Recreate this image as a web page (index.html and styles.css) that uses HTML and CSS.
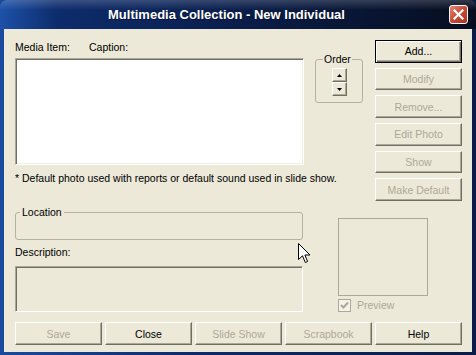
FILE: index.html
```
<!DOCTYPE html>
<html lang="en">
<head>
    <meta charset="UTF-8">
    <meta name="viewport" content="width=device-width, initial-scale=1.0">
    <title>Multimedia Collection - New Individual</title>
    <link rel="stylesheet" href="styles.css">
</head>
<body>
    <div class="window">
        <div class="titlebar">
            <span class="title">Multimedia Collection - New Individual</span>
            <span class="close-btn">
                <svg width="11" height="11" viewBox="0 0 11 11">
                    <path d="M1.5 1.5 L9.5 9.5 M9.5 1.5 L1.5 9.5" stroke="#fff" stroke-width="2.2" stroke-linecap="square"/>
                </svg>
            </span>
        </div>

        <div class="client">
            <div class="top">
                <div class="top-left">
                    <div class="list-row">
                        <div class="list-col">
                            <div class="labels">
                                <span class="lbl-media">Media Item:</span><span>Caption:</span>
                            </div>
                            <div class="listbox"></div>
                        </div>
                        <fieldset class="group order">
                            <legend>Order</legend>
                            <button class="spin">
                                <svg width="5" height="3" viewBox="0 0 5 3"><path d="M2.5 0 L5 3 L0 3 Z" fill="#000"/></svg>
                            </button>
                            <button class="spin">
                                <svg width="5" height="3" viewBox="0 0 5 3"><path d="M0 0 L5 0 L2.5 3 Z" fill="#000"/></svg>
                            </button>
                        </fieldset>
                    </div>
                    <p class="note">* Default photo used with reports or default sound used in slide show.</p>
                </div>

                <div class="side-buttons">
                    <button class="btn default">Add...</button>
                    <button class="btn" disabled>Modify</button>
                    <button class="btn" disabled>Remove...</button>
                    <button class="btn" disabled>Edit Photo</button>
                    <button class="btn" disabled>Show</button>
                    <button class="btn" disabled>Make Default</button>
                </div>
            </div>

            <div class="middle">
                <div class="mid-left">
                    <fieldset class="group location">
                        <legend>Location</legend>
                    </fieldset>
                    <div class="desc-label">Description:</div>
                    <div class="desc-box"></div>
                </div>
                <div class="preview-col">
                    <div class="preview-box"></div>
                    <div class="preview-check">
                        <span class="checkbox">
                            <svg width="9" height="9" viewBox="0 0 9 9">
                                <path d="M1 4 L3.5 6.5 L8 1.5" stroke="#aca899" stroke-width="2" fill="none"/>
                            </svg>
                        </span>
                        <span>Preview</span>
                    </div>
                </div>
            </div>

            <div class="bottom-buttons">
                <button class="btn" disabled>Save</button>
                <button class="btn">Close</button>
                <button class="btn" disabled>Slide Show</button>
                <button class="btn" disabled>Scrapbook</button>
                <button class="btn">Help</button>
            </div>
        </div>

        <!-- mouse pointer over the dialog -->
        <svg class="cursor" width="13" height="21" viewBox="0 0 13 21">
            <path d="M0.5 0.5 L0.5 16.5 L4.5 12.8 L7.3 19.5 L9.6 18.5 L6.9 12 L12 12 Z" fill="#fff" stroke="#000" stroke-width="1"/>
        </svg>
    </div>
</body>
</html>
```

FILE: styles.css
```
body {
    margin: 0;
    font-family: "Liberation Sans", Arial, sans-serif;
    font-size: 10.5px;
    line-height: 13px;
    color: #000;
    background: #0a246a;
}
.window {
    position: relative;
    width: 476px;
    height: 355px;
    box-sizing: border-box;
    padding: 0 4px 3px 4px;
    background: linear-gradient(to right, #1a4a9e 0%, #0c2a6a 40%, #0a1c48 100%);
    display: flex;
    flex-direction: column;
}
.titlebar {
    height: 29px;
    margin: 0 -4px;
    display: flex;
    align-items: center;
    border-radius: 7px 7px 0 0;
    background:
        linear-gradient(to bottom, rgba(255,255,255,0.18) 0%, rgba(255,255,255,0) 35%),
        linear-gradient(to right, #1d51a8 0%, #0d2c6c 12%, #0a1c46 55%, #060d1e 100%);
}
.title {
    flex: 1;
    text-align: center;
    color: #fff;
    font-weight: bold;
    font-size: 13px;
    padding-left: 4px;
    text-shadow: 1px 1px 0 #0a1430;
}
.close-btn {
    width: 19px;
    height: 19px;
    margin-right: 8px;
    box-sizing: border-box;
    border: 1px solid #fff;
    border-radius: 3px;
    background: linear-gradient(to bottom right, #e08a78 0%, #c94a34 50%, #a83422 100%);
    display: flex;
    align-items: center;
    justify-content: center;
}
.client {
    flex: 1;
    background: #ece9d8;
    padding: 11px 0 0 11px;
}
.top {
    display: flex;
    gap: 12px;
    height: 161px;
}
.top-left {
    width: 348px;
}
.list-row {
    display: flex;
    gap: 11px;
}
.list-col {
    width: 289px;
    padding-top: 1px;
}
.lbl-media {
    display: inline-block;
    width: 74px;
}
.listbox {
    margin-top: 4px;
    height: 107px;
    box-sizing: border-box;
    background: #fff;
    border: 1px solid;
    border-color: #aca899 #fff #fff #aca899;
    box-shadow: inset 1px 1px 0 #716f64, inset -1px -1px 0 #f1efe2;
}
.group {
    margin: 0;
    padding: 0;
    border: 1px solid #b5b19f;
    border-radius: 3px;
    min-width: 0;
}
.group legend {
    padding: 0 1px;
    margin-left: 7px;
    line-height: 13px;
}
.order {
    width: 48px;
    height: 50px;
    box-sizing: border-box;
    margin-top: 13px;
    padding-top: 2px;
    display: flex;
    flex-direction: column;
    align-items: center;
}
.spin {
    width: 15px;
    height: 14px;
    padding: 0;
    background: #ece9d8;
    border: 1px solid;
    border-color: #fff #716f64 #716f64 #fff;
    box-shadow: inset -1px -1px 0 #aca899;
    display: flex;
    align-items: center;
    justify-content: center;
}
.note {
    margin: 7px 0 0;
    white-space: nowrap;
}
.side-buttons {
    display: flex;
    flex-direction: column;
    gap: 5px;
}
.btn {
    width: 87px;
    height: 23px;
    padding: 0;
    font-family: "Liberation Sans", Arial, sans-serif;
    font-size: 10.5px;
    color: #000;
    background: #ece9d8;
    border: 1px solid;
    border-color: #fff #716f64 #716f64 #fff;
    box-shadow: inset -1px -1px 0 #aca899;
}
.btn.default {
    border-color: #000;
    box-shadow: inset 1px 1px 0 #fff, inset -1px -1px 0 #716f64, inset -2px -2px 0 #aca899;
}
.btn:disabled {
    color: #aca899;
}
.middle {
    display: flex;
    gap: 35px;
    margin-top: 5px;
}
.mid-left {
    width: 288px;
}
.location {
    height: 34px;
    box-sizing: border-box;
}
.location legend {
    margin-left: 4px;
    padding: 0 2px;
}
.desc-label {
    margin-top: 6px;
}
.desc-box {
    margin-top: 7px;
    height: 46px;
    box-sizing: border-box;
    background: #ece9d8;
    border: 1px solid;
    border-color: #aca899 #fff #fff #aca899;
    box-shadow: inset 1px 1px 0 #716f64;
}
.preview-col {
    width: 90px;
    padding-top: 12px;
}
.preview-box {
    height: 78px;
    box-sizing: border-box;
    border: 1px solid #aca899;
}
.preview-check {
    margin-top: 3px;
    display: flex;
    align-items: center;
    gap: 6px;
    color: #aca899;
}
.checkbox {
    width: 13px;
    height: 13px;
    box-sizing: border-box;
    border: 1px solid #aca899;
    background: #f3f1e8;
    display: flex;
    align-items: center;
    justify-content: center;
}
.bottom-buttons {
    display: flex;
    gap: 3px;
    margin-top: 10px;
}
.cursor {
    position: absolute;
    left: 298px;
    top: 243px;
}
```
